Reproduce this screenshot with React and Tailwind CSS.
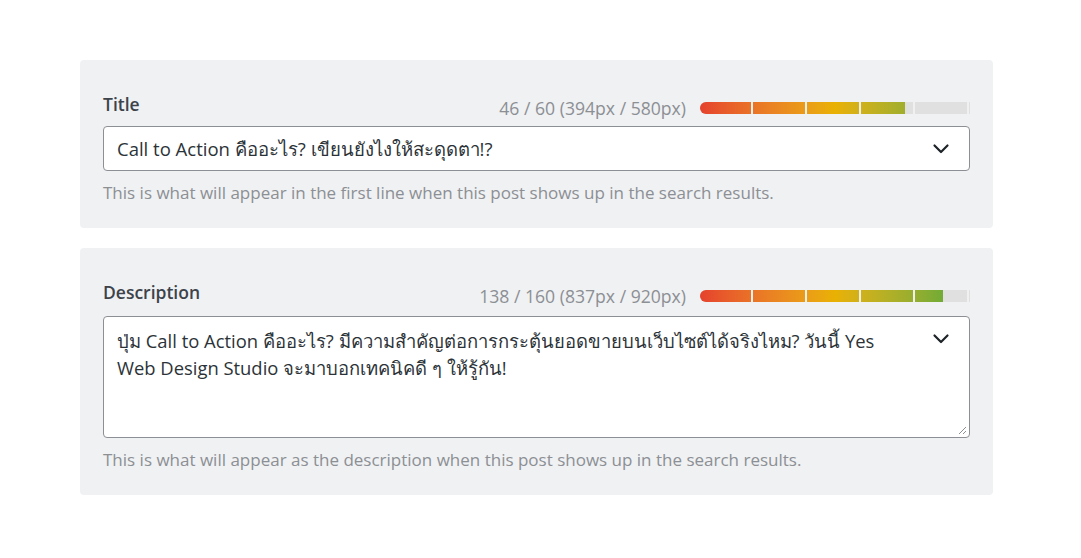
import React from "react";

const font = { fontFamily: '"Open Sans", "Noto Sans", "DejaVu Sans", sans-serif' };

const Chevron = () => (
  <svg width="20" height="20" viewBox="0 0 20 20" fill="none" stroke="#1d2327" strokeWidth="2.2" strokeLinecap="round" strokeLinejoin="round">
    <path d="M3.5 6.5 L10 13 L16.5 6.5" />
  </svg>
);

const Meter = ({ percent }) => {
  const segments = [0, 1, 2, 3, 4];
  return (
    <div className="relative h-[12px] w-[270px] rounded-l-[6px] overflow-hidden bg-[#e0e0e0]">
      <div
        className="absolute inset-y-0 left-0 overflow-hidden"
        style={{ width: `${percent}%` }}
      >
        <div className="h-full w-[270px] bg-gradient-to-r from-[#e5412d] via-[#e9b102] to-[#46a83a]" />
      </div>
      {segments.map((i) => (
        <div
          key={i}
          className="absolute inset-y-0 w-[2px] bg-[#f0f0f1]"
          style={{ left: 51 + i * 54 }}
        />
      ))}
    </div>
  );
};

const Field = ({ label, counter, percent, helper, gap, children }) => (
  <div className="w-[913px] rounded-[4px] bg-[#f0f1f3] px-[23px] pt-[33px] pb-[25px]">
    <div className="flex items-end justify-between">
      <span className="text-[17.5px] font-semibold text-[#3c434a] leading-[22px]">{label}</span>
      <div className="flex items-center gap-[14px] translate-y-[3px]">
        <span className="text-[17.6px] text-[#8c8f94] leading-[20px]">{counter}</span>
        <Meter percent={percent} />
      </div>
    </div>
    <div style={{ marginTop: gap }}>{children}</div>
    <p className="mt-[12px] text-[17px] text-[#8c8f94] leading-[20px]">{helper}</p>
  </div>
);

export default function App() {
  return (
    <div className="min-h-[558px] w-[1081px] bg-white pt-[60px] pl-[80px]" style={font}>
      <div className="flex flex-col gap-[20px]">
        <Field
          label="Title"
          counter="46 / 60 (394px / 580px)"
          percent={76}
          gap={11}
          helper="This is what will appear in the first line when this post shows up in the search results."
        >
          <div className="flex h-[45px] w-[867px] items-center justify-between rounded-[4px] border border-[#8c8f94] bg-white pl-[13px] pr-[18px]">
            <span className="text-[18.5px] text-[#2c3338]">Call to Action คืออะไร? เขียนยังไงให้สะดุดตา!?</span>
            <Chevron />
          </div>
        </Field>
        <Field
          label="Description"
          counter="138 / 160 (837px / 920px)"
          percent={90}
          gap={13}
          helper="This is what will appear as the description when this post shows up in the search results."
        >
          <div className="relative flex h-[122px] w-[867px] justify-between rounded-[4px] border border-[#8c8f94] bg-white pl-[13px] pr-[18px] pt-[10px]">
            <p className="text-[18.4px] leading-[27px] text-[#2c3338]">
              ปุ่ม Call to Action คืออะไร? มีความสำคัญต่อการกระตุ้นยอดขายบนเว็บไซต์ได้จริงไหม? วันนี้ Yes
              <br />
              Web Design Studio จะมาบอกเทคนิคดี ๆ ให้รู้กัน!
            </p>
            <div className="pt-[2px]">
              <Chevron />
            </div>
            <svg className="absolute right-[2px] bottom-[2px]" width="10" height="10" viewBox="0 0 10 10" stroke="#8c8f94" strokeWidth="1">
              <path d="M9 2 L2 9 M9 6 L6 9" />
            </svg>
          </div>
        </Field>
      </div>
    </div>
  );
}
